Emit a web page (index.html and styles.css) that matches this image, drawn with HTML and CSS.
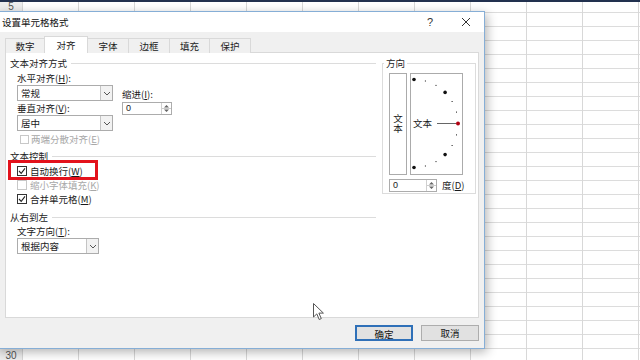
FILE: index.html
```html
<!DOCTYPE html>
<html lang="zh-CN">
<head>
    <meta charset="UTF-8">
    <meta name="viewport" content="width=device-width, initial-scale=1.0">
    <title>设置单元格格式</title>
    <link rel="stylesheet" href="styles.css">
</head>
<body>

    <div class="sheet">
        <div class="row-head">
            <div class="rh-top">5</div>
            <div class="rh-mid"></div>
            <div class="rh-bottom">30</div>
        </div>
        <div class="cells"></div>
    </div>

    <div class="dialog">
        <div class="title-bar">
            <span class="title">设置单元格格式</span>
            <span class="title-btn help">?</span>
            <span class="title-btn">
                <svg width="10" height="10" viewBox="0 0 10 10"><path d="M1 1L9 9M9 1L1 9" stroke="#333" stroke-width="1"/></svg>
            </span>
        </div>

        <div class="dialog-body">
            <div class="tabs">
                <div class="tab t1">数字</div>
                <div class="tab active">对齐</div>
                <div class="tab">字体</div>
                <div class="tab">边框</div>
                <div class="tab t5">填充</div>
                <div class="tab">保护</div>
            </div>

            <div class="panel">
                <div class="col-left">
                    <div class="sec">文本对齐方式</div>
                    <div class="align-row">
                        <div class="align-main">
                            <div class="lbl">水平对齐(<u>H</u>):</div>
                            <div class="combo w96">
                                <span class="combo-text">常规</span>
                                <span class="drop"><svg width="8" height="5" viewBox="0 0 8 5"><path d="M1 1L4 4L7 1" fill="none" stroke="#555"/></svg></span>
                            </div>
                            <div class="lbl">垂直对齐(<u>V</u>):</div>
                            <div class="combo w96">
                                <span class="combo-text">居中</span>
                                <span class="drop"><svg width="8" height="5" viewBox="0 0 8 5"><path d="M1 1L4 4L7 1" fill="none" stroke="#555"/></svg></span>
                            </div>
                        </div>
                        <div class="indent">
                            <div class="lbl">缩进(<u>I</u>):</div>
                            <div class="spin w50">
                                <span class="spin-text">0</span>
                                <span class="spin-btn"><svg width="9" height="11" viewBox="0 0 9 11"><path d="M2 4.5L4.5 2L7 4.5ZM2 6.5L4.5 9L7 6.5Z" fill="#666"/><path d="M0 5.5H9" stroke="#ccc"/></svg></span>
                            </div>
                        </div>
                    </div>
                    <div class="check disabled just">
                        <span class="box"></span>两端分散对齐(<u>E</u>)
                    </div>

                    <div class="sec gap-sec">文本控制</div>
                    <div class="check first">
                        <span class="box"><svg width="8" height="8" viewBox="0 0 8 8"><path d="M1 4L3.2 6.3L7 1.3" fill="none" stroke="#222" stroke-width="1.1"/></svg></span>自动换行(<u>W</u>)
                    </div>
                    <div class="check disabled">
                        <span class="box"></span>缩小字体填充(<u>K</u>)
                    </div>
                    <div class="check">
                        <span class="box"><svg width="8" height="8" viewBox="0 0 8 8"><path d="M1 4L3.2 6.3L7 1.3" fill="none" stroke="#222" stroke-width="1.1"/></svg></span>合并单元格(<u>M</u>)
                    </div>

                    <div class="sec rtl-sec">从右到左</div>
                    <div class="lbl dir-lbl">文字方向(<u>T</u>):</div>
                    <div class="combo w82">
                        <span class="combo-text">根据内容</span>
                        <span class="drop"><svg width="8" height="5" viewBox="0 0 8 5"><path d="M1 1L4 4L7 1" fill="none" stroke="#555"/></svg></span>
                    </div>
                </div>

                <fieldset class="orient">
                    <legend>方向</legend>
                    <div class="orient-boxes">
                        <div class="vbox">
                            <span class="vtext">文本</span>
                        </div>
                        <div class="dial">
                            <svg width="51" height="100" viewBox="0 0 51 100">
                                <g fill="#111">
                                    <circle cx="3" cy="5.5" r="1.8"/>
                                    <circle cx="34.1" cy="18.4" r="1.8"/>
                                    <circle cx="34.1" cy="80.6" r="1.8"/>
                                    <circle cx="3" cy="93.5" r="1.8"/>
                                    <rect x="13.9" y="6.5" width="1" height="1"/>
                                    <rect x="24.5" y="10.9" width="1" height="1"/>
                                    <rect x="40.6" y="27" width="1" height="1"/>
                                    <rect x="45" y="37.6" width="1" height="1"/>
                                    <rect x="45" y="60.4" width="1" height="1"/>
                                    <rect x="40.6" y="71" width="1" height="1"/>
                                    <rect x="24.5" y="87.1" width="1" height="1"/>
                                    <rect x="13.9" y="91.5" width="1" height="1"/>
                                </g>
                                <text x="2" y="53" class="dial-text">文本</text>
                                <path d="M26 49.5H45" stroke="#666" stroke-width="1"/>
                                <circle cx="47" cy="49.5" r="2" fill="#b00010"/>
                            </svg>
                        </div>
                    </div>
                    <div class="deg-row">
                        <div class="spin w48">
                            <span class="spin-text">0</span>
                            <span class="spin-btn"><svg width="9" height="11" viewBox="0 0 9 11"><path d="M2 4.5L4.5 2L7 4.5ZM2 6.5L4.5 9L7 6.5Z" fill="#666"/><path d="M0 5.5H9" stroke="#ccc"/></svg></span>
                        </div>
                        <span class="deg">度(<u>D</u>)</span>
                    </div>
                </fieldset>

                <div class="mark"></div>
            </div>

            <div class="buttons">
                <button class="btn default">确定</button>
                <button class="btn">取消</button>
            </div>
        </div>
    </div>

    <svg class="cursor" width="12" height="18" viewBox="0 0 12 18">
        <path d="M0.5 0.5V14L3.8 10.9L6.2 16.5L8.3 15.6L5.9 10.1H10.4Z" fill="#fff" stroke="#555" stroke-width="1"/>
    </svg>

</body>
</html>
```

FILE: styles.css
```css
* {
    box-sizing: border-box;
}

body {
    margin: 0;
    width: 640px;
    height: 360px;
    overflow: hidden;
    position: relative;
    background: #fff;
    font-family: "Noto Sans CJK SC", "Noto Sans", sans-serif;
    font-size: 9.5px;
    color: #1a1a1a;
}

/* spreadsheet behind the dialog */
.sheet {
    display: grid;
    grid-template-columns: 22px 1fr;
    height: 360px;
    border-top: 2px solid #22314f;
}

.row-head {
    display: flex;
    flex-direction: column;
    background: #eeeeee;
    color: #555;
    font-family: "Liberation Sans", sans-serif;
    font-size: 10px;
    text-align: center;
}

.rh-top {
    height: 11px;
    line-height: 9px;
    border-bottom: 1px solid #cfcfcf;
}

.rh-mid {
    flex: 1;
}

.rh-bottom {
    height: 12px;
    line-height: 14px;
    border-top: 1px solid #cfcfcf;
}

.cells {
    background-image:
        linear-gradient(to right, #d8d8d8 1px, transparent 1px),
        linear-gradient(to bottom, #dcdcdc 1px, transparent 1px);
    background-size: 56px 14px;
    background-position: 0 10px;
}

/* dialog */
.dialog {
    position: absolute;
    left: -4px;
    top: 11px;
    width: 489px;
    height: 338px;
    border: 1px solid #86aed6;
    background: #f0f0f0;
    box-shadow: 2px 3px 10px rgba(0, 0, 0, 0.3);
    display: flex;
    flex-direction: column;
}

.title-bar {
    height: 20px;
    background: #fff;
    display: flex;
    align-items: center;
    padding-left: 5px;
}

.title {
    flex: 1;
    font-size: 9.5px;
    color: #111;
}

.title-btn {
    width: 36px;
    height: 20px;
    display: flex;
    align-items: center;
    justify-content: center;
}

.help {
    font-family: "Liberation Sans", sans-serif;
    font-size: 11px;
    color: #333;
}

.dialog-body {
    flex: 1;
    padding: 4px 5px 0 8px;
}

.tabs {
    display: flex;
    align-items: flex-end;
    height: 17px;
    position: relative;
    z-index: 1;
}

.tab {
    width: 42px;
    height: 15px;
    line-height: 14px;
    text-align: center;
    border: 1px solid #d9d9d9;
    border-bottom: none;
    background: #f0f0f0;
    margin-left: -1px;
    color: #222;
}

.tab.t1 {
    margin-left: 0;
    width: 40px;
}

.tab.t5 {
    width: 41px;
}

.tab.active {
    width: 44px;
    height: 17px;
    line-height: 16px;
    background: #fff;
}

.panel {
    position: relative;
    height: 266px;
    margin-top: -1px;
    background: #fff;
    border: 1px solid #d9d9d9;
    padding: 5px 2px 0 0;
    display: flex;
    align-items: flex-start;
}

.col-left {
    width: 370px;
    display: flex;
    flex-direction: column;
}

.sec {
    display: flex;
    align-items: center;
    height: 10px;
    line-height: 10px;
    padding-left: 4px;
    color: #222;
}

.sec::after {
    content: "";
    flex: 1;
    height: 1px;
    background: #dcdcdc;
    margin-left: 4px;
}

.gap-sec {
    margin-top: 7px;
}

.rtl-sec {
    margin-top: 8px;
}

.lbl {
    height: 10px;
    line-height: 10px;
    white-space: nowrap;
}

.align-row {
    display: flex;
    margin-top: 5px;
    padding-left: 11px;
}

.align-main {
    width: 96px;
    display: flex;
    flex-direction: column;
    gap: 2px;
}

.indent {
    margin-left: 9px;
    padding-top: 16px;
    display: flex;
    flex-direction: column;
    gap: 3px;
}

.combo,
.spin {
    display: flex;
    height: 16px;
    border: 1px solid #acacac;
    background: #fff;
}

.w96 { width: 96px; }
.w82 { width: 82px; }
.w50 { width: 50px; height: 13px; }
.w48 { width: 48px; height: 13px; }

.combo-text,
.spin-text {
    flex: 1;
    padding-left: 3px;
    line-height: 14px;
    white-space: nowrap;
}

.spin-text {
    line-height: 11px;
    font-family: "Liberation Sans", sans-serif;
    font-size: 9px;
}

.drop {
    width: 12px;
    border-left: 1px solid #c4c4c4;
    background: #f2f2f2;
    display: flex;
    align-items: center;
    justify-content: center;
}

.spin-btn {
    width: 10px;
    display: flex;
    align-items: center;
    justify-content: center;
    border-left: 1px solid #d0d0d0;
}

.check {
    display: flex;
    align-items: center;
    height: 10px;
    line-height: 10px;
    margin-top: 4px;
    padding-left: 11px;
    white-space: nowrap;
}

.check.first {
    margin-top: 5px;
}

.check.just {
    margin-top: 3px;
    padding-left: 14px;
}

.box {
    width: 10px;
    height: 10px;
    border: 1px solid #333;
    margin-right: 3px;
    display: flex;
    align-items: center;
    justify-content: center;
    background: #fff;
}

.check.just .box {
    width: 9px;
    height: 9px;
    margin-right: 2px;
}

.check.disabled {
    color: #a8a8a8;
}

.check.disabled .box {
    border-color: #c8c8c8;
}

.dir-lbl {
    margin-top: 4px;
    padding-left: 11px;
}

.col-left .w82 {
    margin-top: 2px;
    margin-left: 11px;
}

/* orientation group */
.orient {
    margin: 0 0 0 6px;
    width: 94px;
    padding: 0 6px 1px 6px;
    border: 1px solid #dcdcdc;
}

.orient legend {
    padding: 0 2px;
    margin-left: -5px;
    height: 10px;
    line-height: 10px;
    color: #222;
}

.orient-boxes {
    display: flex;
    gap: 3px;
    margin-top: 5px;
}

.vbox {
    width: 18px;
    height: 102px;
    border: 1px solid #ababab;
    display: flex;
    align-items: center;
    justify-content: center;
}

.vtext {
    writing-mode: vertical-rl;
    text-orientation: upright;
    line-height: 12px;
    letter-spacing: 0.5px;
}

.dial {
    width: 53px;
    height: 102px;
    border: 1px solid #ababab;
}

.dial svg {
    display: block;
}

.dial-text {
    font-family: "Noto Sans CJK SC", sans-serif;
    font-size: 9.5px;
    fill: #1a1a1a;
}

.deg-row {
    display: flex;
    align-items: center;
    margin-top: 3px;
}

.deg {
    margin-left: 5px;
    white-space: nowrap;
}

/* red highlight around the wrap option */
.mark {
    position: absolute;
    left: 2px;
    top: 107px;
    width: 90px;
    height: 20px;
    border: 3px solid #e3121c;
}

.buttons {
    display: flex;
    justify-content: flex-end;
    gap: 8px;
    margin-top: 7px;
}

.btn {
    width: 58px;
    height: 16px;
    padding: 0;
    font-family: "Noto Sans CJK SC", sans-serif;
    font-size: 9.5px;
    color: #111;
    background: #e1e1e1;
    border: 1px solid #adadad;
}

.btn.default {
    border: 2px solid #2f70b8;
}

.cursor {
    position: absolute;
    left: 313px;
    top: 303px;
}
```
